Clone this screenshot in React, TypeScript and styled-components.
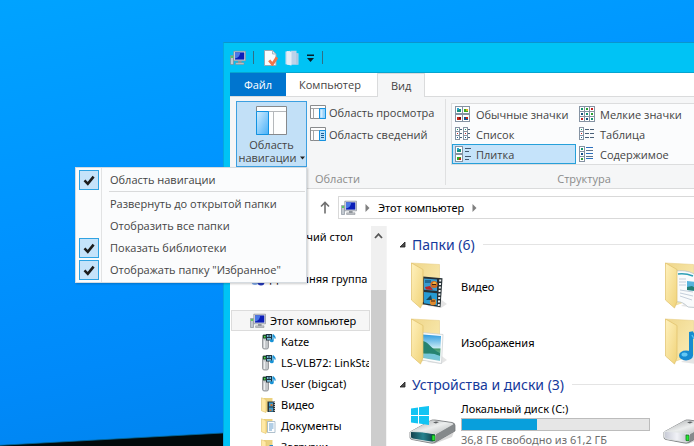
import React, { useState } from "react";
import styled, { createGlobalStyle, css } from "styled-components";

const GlobalStyle = createGlobalStyle`
  * { box-sizing: border-box; }
  body { margin: 0; font-family: "Noto Sans", "Open Sans", sans-serif; font-size: 11px; color: #000; }
  button { font: inherit; color: inherit; background: none; border: 0; padding: 0; margin: 0; text-align: left; white-space: nowrap; }
  svg { display: block; flex: none; }
`;

/* ---------- icons ---------- */

const ComputerIcon = () => (
  <svg width="16" height="16" viewBox="0 0 16 16" aria-hidden="true">
    <path d="M0.5 5.500h3v9h-3z" fill="#c3c9d0" stroke="#7b8590" strokeWidth="0.6" />
    <path d="M1 7h2" stroke="#38c840" strokeWidth="1.6" />
    <path d="M3.800 1.200h11.700v9.600H3.800z" fill="#dcdfe3" stroke="#858d97" strokeWidth="0.7" />
    <path d="M5 2.400h9.300v7.200H5z" fill="#0b1eb8" />
    <path d="M5 2.400h5.200c0 3-2 5.400-5.200 6.200z" fill="#4a78e6" />
    <path d="M8 11h3.600v2H8z" fill="#8f959c" />
    <path d="M5.600 12.800h8.400v1.700H5.600z" fill="#c3c6ca" stroke="#81868d" strokeWidth="0.5" />
  </svg>
);

const PropertiesIcon = () => (
  <svg width="14" height="16" viewBox="0 0 14 16" aria-hidden="true">
    <path d="M.5 .5h8l3.500 3.500v11.500H.5z" fill="#fbfcfd" stroke="#9aa9b6" />
    <path d="M8.500 1v3h3" fill="#e4ebf0" stroke="#9aa9b6" strokeWidth="0.8" />
    <path d="M5.200 10.400l3.200 3.800L13 7.400" fill="none" stroke="#f0764a" strokeWidth="2.8" />
  </svg>
);

const NewFolderIcon = () => (
  <svg width="14" height="16" viewBox="0 0 14 16" aria-hidden="true">
    <path d="M.5 1.500l5-.8v14.600l-5-1z" fill="#cfe0f1" />
    <path d="M6 .8h5.500v2.500h2v11.500H6z" fill="#bcd3ea" />
    <path d="M2 1l4.500 1v13.600L2 14.500z" fill="#e6eef7" />
    <path d="M12 3.500v11" stroke="#a2bdd8" strokeWidth="1" />
  </svg>
);

const CustomizeIcon = () => (
  <svg width="9" height="8" viewBox="0 0 9 8" aria-hidden="true">
    <path d="M1 .5h7v1.500H1z" fill="#071e29" />
    <path d="M1 4h7L4.500 8z" fill="#071e29" />
  </svg>
);

const PaneIcon = ({ kind }: { kind: "preview" | "details" }) => (
  <svg width="16" height="16" viewBox="0 0 16 16" aria-hidden="true">
    <path d="M.5 1.500h15v13H.5z" fill="#fdfdfd" stroke="#898b8d" />
    <path d="M1 4.500h9M3.500 5v9.500" stroke="#a3a6a8" fill="none" />
    <path d="M9.500 4.500h6v10h-6z" fill={kind === "preview" ? "#98d2fb" : "#b8e1fc"} stroke="#1492e0" />
    {kind === "preview" ? (
      <path d="M10.500 5.500h2v8h-2z" fill="#d3ecfd" />
    ) : (
      <path d="M11 7.500h3M11 9.500h3M11 11.500h3" stroke="#1d5c94" />
    )}
  </svg>
);

const NavigationPaneIcon = () => (
  <svg width="32" height="30" viewBox="0 0 32 30" aria-hidden="true">
    <defs>
      <linearGradient id="paneFill" x1="0" y1="0" x2="1" y2="1">
        <stop offset="0" stopColor="#d3edfe" />
        <stop offset="1" stopColor="#48b0f8" />
      </linearGradient>
    </defs>
    <path d="M.5 .5h30v28H.5z" fill="#fdfefe" stroke="#86898c" />
    <path d="M1 5.500h29M17.500 6v22" stroke="#b4b8bb" />
    <path d="M.5 5.500h12v23H.5z" fill="url(#paneFill)" stroke="#1192e2" />
  </svg>
);

type ViewKind = "medium" | "small" | "list" | "table" | "tiles" | "content";

const MiniBox = ({ x, y, s, c }: { x: number; y: number; s: number; c: string }) => (
  <>
    <rect x={x + 0.5} y={y + 0.5} width={s - 1} height={s - 1} fill="#fff" stroke="#8593a3" />
    <rect x={x + Math.floor(s / 2) - (s > 6 ? 2 : 0)} y={y + Math.floor(s / 2) - (s > 6 ? 1 : 0)} width={s > 6 ? 4 : 1} height={s > 6 ? 3 : 1} fill={c} />
  </>
);

const ViewIcon = ({ kind }: { kind: ViewKind }) => (
  <svg width="16" height="16" viewBox="0 0 16 16" aria-hidden="true" shapeRendering="crispEdges">
    {kind === "medium" && (
      <>
        <MiniBox x={0} y={0} s={8} c="#178f7d" />
        <MiniBox x={7} y={0} s={8} c="#37a922" />
        <MiniBox x={0} y={8} s={8} c="#c62616" />
        <MiniBox x={7} y={8} s={8} c="#12508f" />
        <rect x="2" y="2" width="2" height="2" fill="#2aa6cf" />
        <rect x="11" y="3" width="2" height="2" fill="#e0b020" />
        <rect x="4" y="11" width="2" height="2" fill="#7a1410" />
        <rect x="11" y="11" width="2" height="2" fill="#c62616" />
      </>
    )}
    {kind === "small" &&
      [0, 5, 10].map((y, r) =>
        [0, 5, 10].map((x, c) => (
          <React.Fragment key={`${x}-${y}`}>
            <MiniBox x={x} y={y} s={6} c="#17946d" />
            <rect x={x + 2} y={y + 2} width="2" height="2" fill={["#17946d", "#27a032", "#c42222", "#16507c"][(r * 3 + c) % 4]} />
          </React.Fragment>
        ))
      )}
    {kind === "list" &&
      [0, 8].map((x) =>
        [1, 5, 9].map((y, r) => (
          <React.Fragment key={`${x}-${y}`}>
            <MiniBox x={x} y={y} s={5} c={["#17946d", "#c42222", "#17608f"][r]} />
            <path d={`M${x + 5} ${y + 2.5}h2`} stroke="#4a6078" />
          </React.Fragment>
        ))
      )}
    {kind === "table" &&
      [1, 5, 9].map((y, r) => (
        <React.Fragment key={y}>
          <MiniBox x={0} y={y} s={5} c={["#17946d", "#c42222", "#17608f"][r]} />
          <path d={`M6 ${y + 2.5}h4M11 ${y + 2.5}h4`} stroke="#4a6078" />
        </React.Fragment>
      ))}
    {kind === "tiles" && (
      <>
        <MiniBox x={0} y={0} s={8} c="#178f7d" />
        <MiniBox x={0} y={8} s={8} c="#37a922" />
        <rect x="2" y="2" width="2" height="2" fill="#2aa6cf" />
        <rect x="4" y="12" width="2" height="2" fill="#c62616" />
        <path d="M10 2.500h6M10 5.500h4M10 10.500h6M10 13.500h4" stroke="#41586f" />
      </>
    )}
    {kind === "content" && (
      <>
        <MiniBox x={0} y={0} s={6} c="#17946d" />
        <MiniBox x={0} y={5} s={6} c="#17608f" />
        <MiniBox x={0} y={10} s={6} c="#17946d" />
        <rect x="2" y="2" width="2" height="2" fill="#17946d" />
        <rect x="2" y="7" width="2" height="2" fill="#15508a" />
        <rect x="2" y="12" width="2" height="2" fill="#2f9a3c" />
        <path d="M7 1.500h7M7 7.500h7M7 12.500h7" stroke="#2b6fbd" />
        <path d="M7 4.500h7M7 10.500h7" stroke="#5f7389" />
      </>
    )}
  </svg>
);

const CheckIcon = () => (
  <svg width="12" height="11" viewBox="0 0 12 11" aria-hidden="true">
    <path d="M1.500 5.400l3.300 3.400L10.600 1.600" fill="none" stroke="#1c1c1c" strokeWidth="2.600" />
  </svg>
);

const UpIcon = () => (
  <svg width="10" height="13" viewBox="0 0 10 13" aria-hidden="true">
    <path d="M5 12.500V1.500M1 5.500l4-4 4 4" fill="none" stroke="#6f6f6f" strokeWidth="1.600" />
  </svg>
);

const CrumbIcon = () => (
  <svg width="5" height="8" viewBox="0 0 5 8" aria-hidden="true">
    <path d="M.5 0l4 4-4 4z" fill="#7f7f7f" />
  </svg>
);

const ScrollUpIcon = () => (
  <svg width="9" height="6" viewBox="0 0 9 6" aria-hidden="true">
    <path d="M1 5l3.500-3.800L8 5" fill="none" stroke="#575757" strokeWidth="1.800" />
  </svg>
);

const ExpandIcon = () => (
  <svg width="7" height="7" viewBox="0 0 7 7" aria-hidden="true">
    <path d="M6 1v5H1z" fill="#4c4c4c" stroke="#1f1f1f" strokeWidth="0.800" />
  </svg>
);

const CaretIcon = () => (
  <svg width="5" height="4" viewBox="0 0 5 4" aria-hidden="true">
    <path d="M0 .5h5L2.500 3.500z" fill="#222" />
  </svg>
);

const HomeGroupIcon = () => (
  <svg width="16" height="16" viewBox="0 0 16 16" aria-hidden="true">
    <circle cx="8" cy="5" r="3.500" fill="#3ab0d8" />
    <circle cx="5" cy="10.500" r="3.500" fill="#7fa8e8" />
    <circle cx="11" cy="11" r="3.500" fill="#2438b8" />
  </svg>
);

const MediaServerIcon = () => (
  <svg width="16" height="17" viewBox="0 0 16 17" aria-hidden="true">
    <rect x="1.500" y="1.500" width="6" height="14.500" rx="1.800" fill="#c3c6c9" stroke="#85898d" strokeWidth="0.800" />
    <path d="M3.500 7.500v7.500" stroke="#eceef0" strokeWidth="1.300" />
    <path d="M2 2h5.500v3.500H2z" fill="#174d29" />
    <path d="M3 3h1.500v1.500H3z" fill="#57de52" />
    <path d="M5 1h6v6.500H5z" fill="#20323f" />
    <path d="M6 2h1.500v2H6zM8.500 2h1.500v2H8.500zM6 5h4v1.800H6z" fill="#75b9d5" />
    <path d="M12 7.500V1.500c.8 1.800 2.500 1.800 2 4.200" fill="none" stroke="#1692d6" strokeWidth="1.300" />
    <ellipse cx="10.800" cy="7.800" rx="1.900" ry="1.500" fill="#1692d6" />
  </svg>
);

type FolderKind = "video" | "docs" | "downloads";

const SmallFolderIcon = ({ kind }: { kind: FolderKind }) => (
  <svg width="16" height="16" viewBox="0 0 16 16" aria-hidden="true">
    <path d="M3 1h8.500v13.500H3z" fill="#ecd280" />
    <path d="M.5 .8l4.500 1.700v13L.5 13.800z" fill="#ffe9a6" stroke="#e2c268" strokeWidth="0.600" />
    {kind === "video" && (
      <>
        <path d="M6.500 4.500h7.500v10.500H6.500z" fill="#27323a" />
        <path d="M8 5.500h4v4H8zM8 10.500h4v4H8z" fill="#3f9fd2" />
        <path d="M9.500 7h2v2h-2zM8.500 12.500h2v1.500h-2z" fill="#d1722e" />
        <path d="M13.300 5v10" stroke="#d8dcde" strokeDasharray="1 1" />
      </>
    )}
    {kind === "docs" && (
      <>
        <path d="M6.500 3.500h7.500v11H6.500z" fill="#fdfeff" stroke="#9db2c4" strokeWidth="0.800" />
        <path d="M8 6h4.500M8 8h4.500M8 10h4.500M8 12h3" stroke="#5795c7" strokeWidth="0.900" />
      </>
    )}
    {kind === "downloads" && <path d="M8.500 6h3.500v4h2.500L10.200 14.500 6 10h2.500z" fill="#2289d0" />}
  </svg>
);

type BigFolderKind = "video" | "pictures" | "docs" | "music";

const BigFolderIcon = ({ kind }: { kind: BigFolderKind }) => (
  <svg width="40" height="48" viewBox="0 0 40 48" aria-hidden="true">
    <defs>
      <linearGradient id={`back-${kind}`} x1="0" y1="0" x2="1" y2="1">
        <stop offset="0" stopColor="#efd68a" />
        <stop offset="1" stopColor="#fbeeb8" />
      </linearGradient>
      <linearGradient id={`front-${kind}`} x1="0" y1="0" x2="1" y2="1">
        <stop offset="0" stopColor="#fff1bd" />
        <stop offset="1" stopColor="#f0d379" />
      </linearGradient>
      <linearGradient id={`sky-${kind}`} x1="0" y1="0" x2="0" y2="1">
        <stop offset="0" stopColor="#2d9bdf" />
        <stop offset="0.500" stopColor="#c5e9f4" />
        <stop offset="0.550" stopColor="#43996b" />
        <stop offset="1" stopColor="#8fd0dd" />
      </linearGradient>
    </defs>
    <path d="M28 36l8 6-6 4-14-2z" fill="#000" opacity="0.100" />
    <path d="M.5 1L28.500 2.500v34L11 43z" fill={`url(#back-${kind})`} stroke="#ead08a" strokeWidth="0.600" />
    {kind === "video" && (
      <>
        <path d="M12 14.500l19.500 1.800-2 29-18-3z" fill="#263035" />
        <path d="M13 16.500l13 1v11.500l-13-1.200z" fill="#3a9bd0" />
        <path d="M13 30l13 1.300v12l-13-2z" fill="#279bd3" />
        <circle cx="23" cy="22.500" r="3.600" fill="#cc6a24" />
        <circle cx="23.500" cy="21.500" r="1.800" fill="#f0b43e" />
        <path d="M14 25l5-1 3 4-7-.5z" fill="#b92727" />
        <path d="M14 18h6v3h-6z" fill="#206a97" />
        <circle cx="22" cy="40" r="3.200" fill="#e08a2e" />
        <path d="M15 38l5-5 1 5z" fill="#16485c" />
        <path d="M20 39h4M21 22.500h4" stroke="#442312" strokeWidth="1.200" />
        <path d="M29.300 17.500l-1.600 26.500" stroke="#eef1f2" strokeWidth="2" strokeDasharray="2 1.500" />
      </>
    )}
    {kind === "pictures" && (
      <>
        <path d="M11 14.500l21 2-1.500 29L11 42z" fill="#fbfcfc" stroke="#c7cdd0" strokeWidth="0.700" />
        <path d="M12 16.500l18 1.500-1 25-17-3z" fill={`url(#sky-${kind})`} />
        <path d="M12 23c6 1 8 8 17 12v3l-17-3z" fill="#268370" />
        <path d="M12 36c6-1 11-1 17 2v4l-17-2.500z" fill="#76c6d8" />
      </>
    )}
    {kind === "docs" && (
      <>
        <path d="M11 9c9-1 15 1 18 3l10 3v31l-16-1c-3-3-7-6-12-5z" fill="#f9fbfc" stroke="#b6c2c9" strokeWidth="0.800" />
        <path d="M13 12c6-1 10 0 15 2" stroke="#2c9fb5" strokeWidth="1.500" fill="none" />
        <path d="M14 17h7M14 20h7M14 23h7M15 28l13 2M15 31l13 3M15 34l12 4" stroke="#c5cfdb" />
        <path d="M22 19l10 1v9l-10-1z" fill="#58b4dc" />
        <path d="M22 25l5-1 5 3v2l-10-1z" fill="#237f73" />
      </>
    )}
    {kind === "music" && (
      <>
        <path d="M26 38V14c3 8 12 7 12 17" fill="none" stroke="#188ccf" strokeWidth="4" />
        <path d="M27 17c3 7 9 7 11 12" fill="none" stroke="#54c3f1" strokeWidth="1.500" />
        <ellipse cx="21" cy="37.500" rx="7" ry="5" fill="#168bd0" />
        <ellipse cx="19.500" cy="36.500" rx="3" ry="2" fill="#62c8f4" />
      </>
    )}
    <path d="M.5 1L12 7.500v32L9.500 46 .5 38z" fill={`url(#front-${kind})`} stroke="#dfc06a" strokeWidth="0.700" />
  </svg>
);

const DriveIcon = ({ system }: { system?: boolean }) => (
  <svg width="48" height="42" viewBox="0 0 48 42" aria-hidden="true">
    <defs>
      <linearGradient id={system ? "lidSys" : "lid"} x1="0" y1="0" x2="1" y2="1">
        <stop offset="0" stopColor="#a3a6a8" />
        <stop offset="0.500" stopColor="#eceeee" />
        <stop offset="1" stopColor="#b1b4b5" />
      </linearGradient>
      <linearGradient id={system ? "faceSys" : "face"} x1="0" y1="0" x2="1" y2="0">
        <stop offset="0" stopColor={system ? "#143f4c" : "#c7cad5"} />
        <stop offset="0.500" stopColor={system ? "#26838f" : "#f1f2f7"} />
        <stop offset="1" stopColor={system ? "#0d3740" : "#b9bcc5"} />
      </linearGradient>
    </defs>
    <path d="M2 36l22 5 21-12-2 5-18 7z" fill="#000" opacity="0.150" />
    <path d="M1 29L21 18q2-1.500 5-1l17 2.500q3 .5 3 3V28L26 39.500q-2 1-4.500.5L3 36.500q-2-.5-2-2z" fill="#8e9294" stroke="#65696c" strokeWidth="0.700" />
    <path d="M1.500 28.500L21 18q2-1 5-.5l17 2.500q2 .5 1 1.500L27 31.500z" fill={`url(#${system ? "lidSys" : "lid"})`} />
    <path d="M27 31.500L45 21.500v6L27 38.500z" fill="#85898b" />
    <path d="M1.500 28.500q11-.5 25 2.500l-.5 7q-2 1.500-4 1L4 36q-2.500-.5-2.500-2z" fill={`url(#${system ? "faceSys" : "face"})`} stroke="#e3e6e7" strokeWidth="0.900" />
    <path d="M23 32l3 .3v5.500l-3-.3z" fill="#27e833" stroke="#077111" strokeWidth="0.700" />
    <path d="M24 19.500l3-1 3 .6-3 1.300z" fill="#5d6163" />
    {system && <path d="M2 5.400l7-1v7.600H2zM10 4.300l10-1.300v9H10zM2 13h7v7.500l-7-.9zM10 13h10v9l-10-1.400z" fill="#12c4f3" />}
  </svg>
);

/* ---------- layout ---------- */

const Desktop = styled.main`
  position: relative;
  height: 100vh;
  overflow: hidden;
  background: linear-gradient(168deg, #00a3ff 0%, #0094ff 38%, #008afa 65%, #007fe4 100%);
`;

const Horizon = styled.svg`
  position: absolute;
  left: 0;
  bottom: 0;
`;

const Window = styled.section`
  position: absolute;
  left: 223px;
  top: 42px;
  right: 0;
  bottom: 0;
  display: flex;
  flex-direction: column;
  padding-left: 6px;
  background: #00c3f5;
  border-top: 1px solid #0a95cd;
  border-left: 1px solid #07a7de;
`;

const TitleBar = styled.header`
  flex: none;
  display: flex;
  align-items: center;
  height: 30px;
  border-bottom: 1px solid #06a4cf;
`;

const TitleRule = styled.span<{ $after: number }>`
  flex: none;
  width: 1px;
  height: 13px;
  margin: 0 ${(p) => p.$after}px 0 7px;
  background: #2f6f86;
`;

const QuickButton = styled.button`
  margin-right: 7px;
`;

const Tabs = styled.nav`
  flex: none;
  display: flex;
  align-items: flex-end;
  height: 24px;
  background: #fff;
  border-bottom: 1px solid #dadbdc;
  font-family: "Open Sans", "Noto Sans", sans-serif;
`;

const Tab = styled.button<{ $kind?: "file" | "active" }>`
  height: 24px;
  padding: 0 13px;
  line-height: 26px;
  color: #444;
  ${(p) =>
    p.$kind === "file" &&
    css`
      width: 56px;
      height: 23px;
      padding: 0;
      text-align: center;
      line-height: 24px;
      background: #0075cf;
      color: #fff;
    `}
  ${(p) =>
    p.$kind === "active" &&
    css`
      margin-bottom: -1px;
      line-height: 24px;
      background: #f5f6f7;
      border: 1px solid #dadbdc;
      border-bottom: 0;
    `}
`;

const TabSpacer = styled.span`
  width: 3px;
`;

const Ribbon = styled.div`
  flex: none;
  display: flex;
  height: 92px;
  padding-top: 2px;
  background: #f5f6f7;
  border-bottom: 1px solid #dadbdc;
  color: #444;
  font-family: "Open Sans", "Noto Sans", sans-serif;
`;

const RibbonGroup = styled.section<{ $width: number }>`
  flex: none;
  display: flex;
  flex-direction: column;
  justify-content: space-between;
  width: ${(p) => p.$width}px;
  margin-bottom: 3px;
  border-right: 1px solid #dfe0e1;
`;

const GroupBody = styled.div`
  display: flex;
  align-items: flex-start;
  padding: 2px 5px 0 6px;
`;

const GroupTitle = styled.div`
  text-align: center;
  line-height: 13px;
  color: #8b8b8b;
`;

const MenuAnchor = styled.div`
  position: relative;
`;

const NavPaneButton = styled.button`
  display: flex;
  flex-direction: column;
  align-items: center;
  width: 71px;
  height: 66px;
  padding-top: 4px;
  line-height: 13px;
  background: #c2e0f7;
  border: 1px solid #3c9fe0;
`;

const NavPaneCaption = styled.span`
  margin-top: 2px;
  text-align: center;
`;

const CaptionLine = styled.span`
  display: flex;
  align-items: center;
  justify-content: center;
  gap: 3px;
`;

const PaneButtons = styled.div`
  display: flex;
  flex-direction: column;
  padding-left: 3px;
`;

const PaneButton = styled.button`
  display: flex;
  align-items: center;
  gap: 3px;
  height: 22px;
`;

const Gallery = styled.div`
  display: grid;
  grid-template-columns: 124px 124px;
  grid-auto-rows: 20px;
  width: 266px;
  margin: 2px 0 0 -1px;
  background: #fbfcfd;
  border: 1px solid #dcddde;
`;

const GalleryItem = styled.button<{ $selected: boolean }>`
  display: flex;
  align-items: center;
  gap: 5px;
  padding: 0 0 0 2px;
  border: 1px solid ${(p) => (p.$selected ? "#26a0da" : "transparent")};
  background: ${(p) => (p.$selected ? "#c5e3fa" : "transparent")};
`;

/* ---------- drop-down menu ---------- */

const Menu = styled.div`
  position: absolute;
  z-index: 2;
  top: 100%;
  right: 0;
  width: 232px;
  padding: 1px 0;
  color: #444;
  background: linear-gradient(90deg, #fbfcfd 25px, #e2e3e4 25px, #e2e3e4 26px, #fbfcfd 26px);
  border: 1px solid #d5dbe0;
  box-shadow: 1px 1px 2px rgba(0, 0, 0, 0.2);
`;

const menuRow = css`
  display: grid;
  grid-template-columns: 20px 1fr;
  column-gap: 11px;
  align-items: center;
  width: 100%;
  height: 22px;
  padding-left: 3px;
`;

const MenuCheckRow = styled.label`
  ${menuRow}
`;

const MenuButtonRow = styled.button`
  ${menuRow}
`;

const MenuText = styled.span`
  grid-column: 2;
  padding-bottom: 2px;
`;

const TickCell = styled.span`
  display: grid;
  place-items: center;
  width: 20px;
  height: 20px;

  > * {
    grid-area: 1 / 1;
  }

  > svg {
    pointer-events: none;
  }
`;

const Tick = styled.input`
  appearance: none;
  width: 20px;
  height: 20px;
  margin: 0;

  &:checked {
    background: #c5e3fa;
    border: 1px solid #30a3e2;
  }

  &:not(:checked) + svg {
    visibility: hidden;
  }
`;

const MenuRule = styled.hr`
  height: 1px;
  margin: 0 1px 1px 33px;
  border: 0;
  background: #d9dadb;
`;

/* ---------- address bar ---------- */

const AddressRow = styled.div`
  flex: none;
  display: flex;
  align-items: center;
  gap: 8px;
  height: 37px;
  padding-left: 90px;
  background: #fff;
`;

const AddressBar = styled.div`
  flex: 1;
  display: flex;
  align-items: center;
  gap: 8px;
  height: 23px;
  padding-left: 2px;
  border: 1px solid #d9d9d9;
  border-right: 0;
`;

/* ---------- body ---------- */

const Body = styled.div`
  flex: 1;
  display: flex;
  min-height: 0;
  overflow: hidden;
  background: #fff;
`;

const Tree = styled.ul`
  flex: none;
  width: 141px;
  margin: 0;
  padding: 0 1px;
  list-style: none;
  overflow: hidden;
`;

const TreeItem = styled.li`
  height: 21px;
`;

const TreeButton = styled.button<{ $level: number; $selected?: boolean }>`
  display: flex;
  align-items: center;
  gap: 4px;
  width: 100%;
  height: 21px;
  padding-left: ${(p) => 7 + p.$level * 11}px;
  overflow: hidden;
  background: ${(p) => (p.$selected ? "#f6f6f6" : "transparent")};
  border: 1px solid ${(p) => (p.$selected ? "#dcdcdc" : "transparent")};
`;

const ScrollBar = styled.div`
  flex: none;
  display: flex;
  flex-direction: column;
  width: 15px;
  background: #f0f0f0;
`;

const ScrollButton = styled.button`
  display: flex;
  justify-content: center;
  padding-top: 7px;
  height: 17px;
`;

const ScrollThumb = styled.div`
  flex: 1;
  margin-top: 47px;
  background: #cdcdcd;
`;

const Content = styled.div`
  flex: 1;
  min-width: 0;
  overflow: hidden;
  padding: 6px 0 0 12px;
  border-left: 1px solid #f4f4f4;
`;

const SectionTitle = styled.h2`
  display: flex;
  align-items: center;
  gap: 6px;
  height: 24px;
  margin: 0;
  font-size: 14px;
  font-weight: 400;
  color: #15399b;
  white-space: nowrap;

  &::after {
    content: "";
    flex: 1;
    height: 1px;
    margin-left: 2px;
    background: #e4e4e4;
  }
`;

const TileGrid = styled.div<{ $row: number }>`
  display: grid;
  grid-template-columns: repeat(2, 254px);
  grid-auto-rows: ${(p) => p.$row}px;
  padding: 2px 0 2px 12px;
`;

const Tile = styled.button`
  display: flex;
  align-items: center;
  gap: 10px;
`;

const DriveTile = styled(Tile)`
  gap: 4px;
  margin-left: -2px;
`;

const DriveInfo = styled.span`
  flex: none;
  display: flex;
  flex-direction: column;
  width: 189px;
  line-height: 16px;
`;

const Meter = styled.span`
  display: block;
  height: 13px;
  margin: 1px 0;
  background: #e6e6e6;
  border: 1px solid #bcbcbc;
`;

const MeterFill = styled.span`
  display: block;
  height: 100%;
  background: #089fdc;
`;

const FreeSpace = styled.span`
  color: #6d6d6d;
`;

/* ---------- data ---------- */

const views: { kind: ViewKind; label: string }[] = [
  { kind: "medium", label: "Обычные значки" },
  { kind: "small", label: "Мелкие значки" },
  { kind: "list", label: "Список" },
  { kind: "table", label: "Таблица" },
  { kind: "tiles", label: "Плитка" },
  { kind: "content", label: "Содержимое" },
];

const tree = [
  { label: "Рабочий стол", level: 2, icon: <ComputerIcon /> },
  null,
  { label: "Домашняя группа", level: 1, icon: <HomeGroupIcon /> },
  null,
  { label: "Этот компьютер", level: 1, icon: <ComputerIcon />, selected: true },
  { label: "Katze", level: 2, icon: <MediaServerIcon /> },
  { label: "LS-VLB72: LinkStation", level: 2, icon: <MediaServerIcon /> },
  { label: "User (bigcat)", level: 2, icon: <MediaServerIcon /> },
  { label: "Видео", level: 2, icon: <SmallFolderIcon kind="video" /> },
  { label: "Документы", level: 2, icon: <SmallFolderIcon kind="docs" /> },
  { label: "Загрузки", level: 2, icon: <SmallFolderIcon kind="downloads" /> },
];

const folders: { kind: BigFolderKind; label: string }[] = [
  { kind: "video", label: "Видео" },
  { kind: "docs", label: "Документы" },
  { kind: "pictures", label: "Изображения" },
  { kind: "music", label: "Музыка" },
];

const systemDrive = { label: "Локальный диск (C:)", free: "36,8 ГБ свободно из 61,2 ГБ", used: 40 };

const MenuCheck = ({ label }: { label: string }) => (
  <MenuCheckRow>
    <TickCell>
      <Tick type="checkbox" defaultChecked />
      <CheckIcon />
    </TickCell>
    <MenuText>{label}</MenuText>
  </MenuCheckRow>
);

export default function App() {
  const [view, setView] = useState<ViewKind>("tiles");

  return (
    <>
      <GlobalStyle />
      <Desktop>
        <Horizon width="223" height="14" viewBox="0 0 223 14" aria-hidden="true">
          <path d="M0 13.300L223 1v13H0z" fill="#020a0b" />
          <path d="M0 13.300L223 1" stroke="#046b9c" strokeWidth="0.800" />
        </Horizon>
        <Window aria-label="Этот компьютер">
          <TitleBar>
            <ComputerIcon />
            <TitleRule $after={10} />
            <QuickButton aria-label="Свойства"><PropertiesIcon /></QuickButton>
            <QuickButton aria-label="Новая папка"><NewFolderIcon /></QuickButton>
            <button aria-label="Настройка панели быстрого доступа"><CustomizeIcon /></button>
            <TitleRule $after={0} />
          </TitleBar>
          <Tabs>
            <Tab $kind="file">Файл</Tab>
            <Tab>Компьютер</Tab>
            <TabSpacer />
            <Tab $kind="active">Вид</Tab>
          </Tabs>
          <Ribbon>
            <RibbonGroup $width={216}>
              <GroupBody>
                <MenuAnchor>
                  <NavPaneButton aria-haspopup="menu" aria-expanded="true">
                    <NavigationPaneIcon />
                    <NavPaneCaption>
                      Область
                      <CaptionLine>навигации<CaretIcon /></CaptionLine>
                    </NavPaneCaption>
                  </NavPaneButton>
                  <Menu>
                    <MenuCheck label="Область навигации" />
                    <MenuRule />
                    <MenuButtonRow><MenuText>Развернуть до открытой папки</MenuText></MenuButtonRow>
                    <MenuButtonRow><MenuText>Отобразить все папки</MenuText></MenuButtonRow>
                    <MenuCheck label="Показать библиотеки" />
                    <MenuCheck label={'Отображать папку "Избранное"'} />
                  </Menu>
                </MenuAnchor>
                <PaneButtons>
                  <PaneButton><PaneIcon kind="preview" />Область просмотра</PaneButton>
                  <PaneButton><PaneIcon kind="details" />Область сведений</PaneButton>
                </PaneButtons>
              </GroupBody>
              <GroupTitle>Области</GroupTitle>
            </RibbonGroup>
            <RibbonGroup $width={277}>
              <GroupBody>
                <Gallery>
                  {views.map((v) => (
                    <GalleryItem key={v.kind} $selected={v.kind === view} aria-pressed={v.kind === view} onClick={() => setView(v.kind)}>
                      <ViewIcon kind={v.kind} />
                      {v.label}
                    </GalleryItem>
                  ))}
                </Gallery>
              </GroupBody>
              <GroupTitle>Структура</GroupTitle>
            </RibbonGroup>
          </Ribbon>
          <AddressRow>
            <button aria-label="Вверх"><UpIcon /></button>
            <AddressBar>
              <ComputerIcon />
              <CrumbIcon />
              <button>Этот компьютер</button>
              <CrumbIcon />
            </AddressBar>
          </AddressRow>
          <Body>
            <Tree>
              {tree.map((node, i) => (
                <TreeItem key={i}>
                  {node && (
                    <TreeButton $level={node.level} $selected={node.selected}>
                      {node.icon}
                      {node.label}
                    </TreeButton>
                  )}
                </TreeItem>
              ))}
            </Tree>
            <ScrollBar>
              <ScrollButton aria-label="Прокрутить вверх"><ScrollUpIcon /></ScrollButton>
              <ScrollThumb />
            </ScrollBar>
            <Content>
              <SectionTitle><ExpandIcon />Папки (6)</SectionTitle>
              <TileGrid $row={56}>
                {folders.map((f) => (
                  <Tile key={f.kind}>
                    <BigFolderIcon kind={f.kind} />
                    {f.label}
                  </Tile>
                ))}
              </TileGrid>
              <SectionTitle><ExpandIcon />Устройства и диски (3)</SectionTitle>
              <TileGrid $row={52}>
                <DriveTile>
                  <DriveIcon system />
                  <DriveInfo>
                    {systemDrive.label}
                    <Meter role="meter" aria-label="Занято" aria-valuenow={systemDrive.used} aria-valuemin={0} aria-valuemax={100}>
                      <MeterFill style={{ width: `${systemDrive.used}%` }} />
                    </Meter>
                    <FreeSpace>{systemDrive.free}</FreeSpace>
                  </DriveInfo>
                </DriveTile>
                <DriveTile aria-label="Локальный диск"><DriveIcon /></DriveTile>
              </TileGrid>
            </Content>
          </Body>
        </Window>
      </Desktop>
    </>
  );
}
